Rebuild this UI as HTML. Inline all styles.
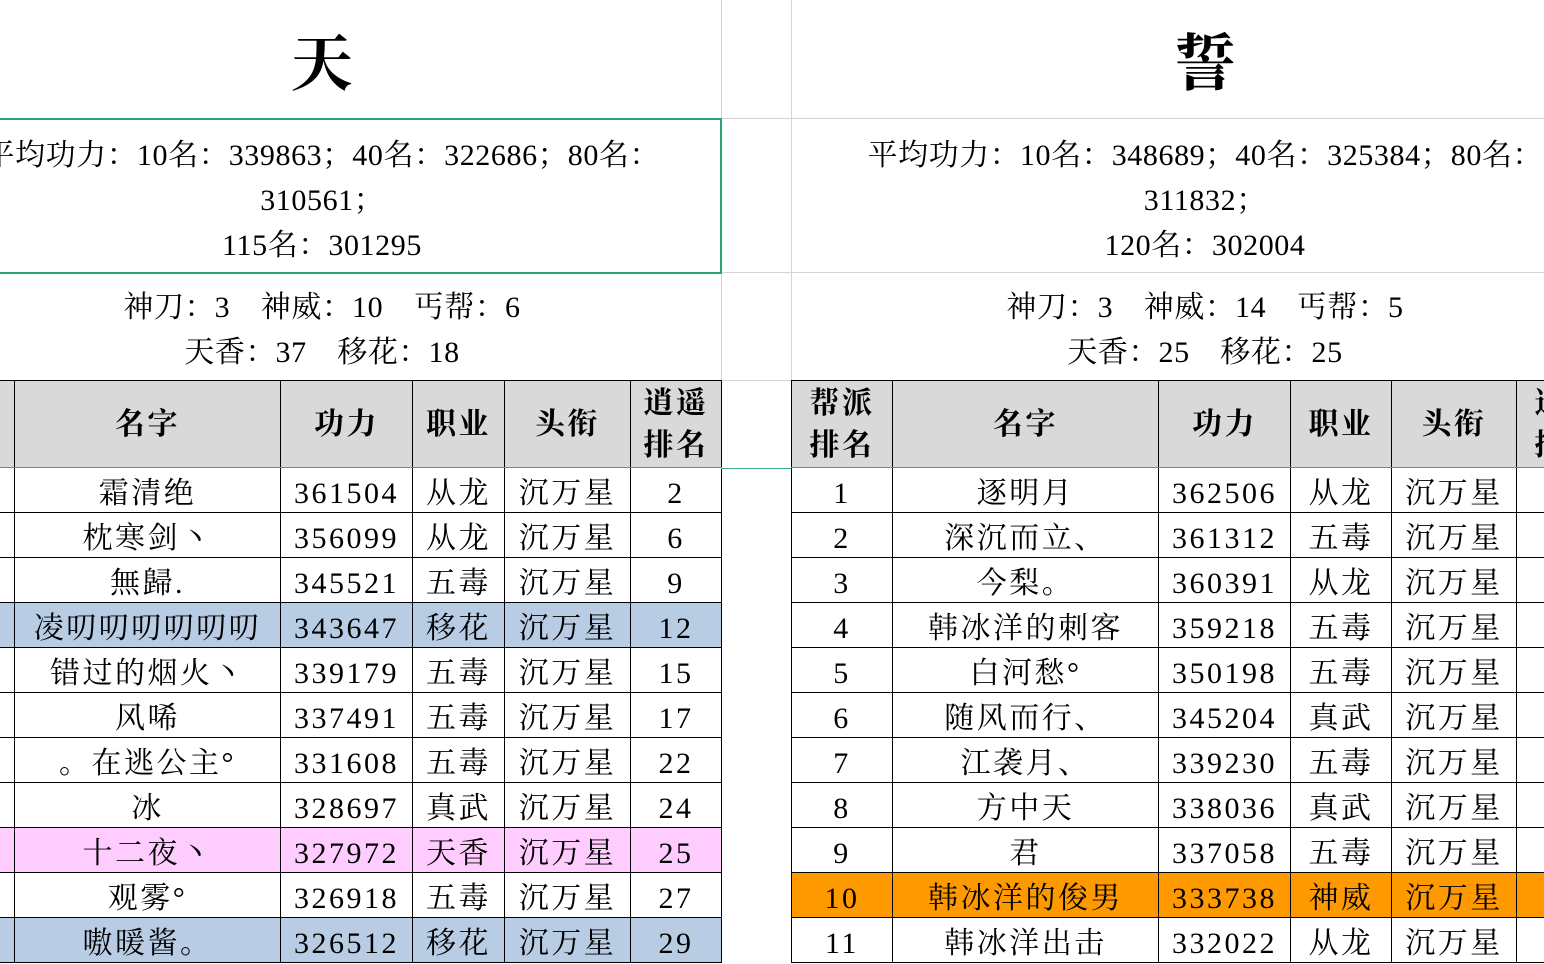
<!DOCTYPE html>
<html><head><meta charset="utf-8"><style>
body{margin:0;width:1544px;height:964px;overflow:hidden;background:#fff;position:relative;font-family:"Liberation Serif","Noto Serif CJK SC",serif;color:#000}
.v{position:absolute;top:0;height:380px;width:1px;background:#d4d4d4}
.h{position:absolute;height:1px;background:#d4d4d4}
.t{position:absolute;white-space:nowrap;text-align:center;font-size:30px;line-height:45px;letter-spacing:0.6px}
.c{display:inline-block;width:30px;text-align:left;letter-spacing:0}
table{position:absolute;top:380px;border-collapse:collapse;table-layout:fixed}
td{border:1px solid #000;height:37px;padding:7px 0 0;text-align:center;font-size:30px;line-height:37px;white-space:nowrap;overflow:hidden;letter-spacing:2.5px}
tr.hd td{background:#d9d9d9;font-weight:bold;height:84px;line-height:42px;padding:2px 0 0;border-bottom:1px solid #3aaa80}
.b td{background:#b8cce4}.p td{background:#ffccff}.o td{background:#ff9900}
</style></head><body>
<div class="v" style="left:721px"></div><div class="v" style="left:791px"></div>
<div class="h" style="left:721px;width:823px;top:118px"></div>
<div class="h" style="left:721px;width:823px;top:272px"></div>
<div class="h" style="left:721px;width:70px;top:380px"></div>
<div class="t" style="left:122px;width:400px;top:20px;font-size:62px;line-height:90px;font-weight:bold">天</div>
<div class="t" style="left:1005px;width:400px;top:20px;font-size:62px;line-height:90px;font-weight:bold">誓</div>
<div class="t" style="left:-78px;width:800px;top:133px">平均功力<span class="c">：</span>10名<span class="c">：</span>339863<span class="c">；</span>40名<span class="c">：</span>322686<span class="c">；</span>80名<span class="c">：</span><br>310561<span class="c">；</span><br>115名<span class="c">：</span>301295</div>
<div class="t" style="left:805px;width:800px;top:133px">平均功力<span class="c">：</span>10名<span class="c">：</span>348689<span class="c">；</span>40名<span class="c">：</span>325384<span class="c">；</span>80名<span class="c">：</span><br>311832<span class="c">；</span><br>120名<span class="c">：</span>302004</div>
<div class="t" style="left:-78px;width:800px;top:285px">神刀<span class="c">：</span>3　神威<span class="c">：</span>10　丐帮<span class="c">：</span>6<br>天香<span class="c">：</span>37　移花<span class="c">：</span>18</div>
<div class="t" style="left:805px;width:800px;top:285px">神刀<span class="c">：</span>3　神威<span class="c">：</span>14　丐帮<span class="c">：</span>5<br>天香<span class="c">：</span>25　移花<span class="c">：</span>25</div>
<div style="position:absolute;left:-2px;top:118px;border:2px solid #2ea66f;box-sizing:border-box;width:724px;height:156px"></div>
<table style="left:-86px;width:808px">
<colgroup><col style="width:100px"><col style="width:266px"><col style="width:132px"><col style="width:92px"><col style="width:126px"><col style="width:91px"></colgroup>
<tr class="hd"><td>帮派<br>排名</td><td>名字</td><td>功力</td><td>职业</td><td>头衔</td><td>逍遥<br>排名</td></tr>
<tr><td></td><td>霜清绝</td><td>361504</td><td>从龙</td><td>沉万星</td><td>2</td></tr>
<tr><td></td><td>枕寒剑丶</td><td>356099</td><td>从龙</td><td>沉万星</td><td>6</td></tr>
<tr><td></td><td>無歸.</td><td>345521</td><td>五毒</td><td>沉万星</td><td>9</td></tr>
<tr class="b"><td></td><td>凌叨叨叨叨叨叨</td><td>343647</td><td>移花</td><td>沉万星</td><td>12</td></tr>
<tr><td></td><td>错过的烟火丶</td><td>339179</td><td>五毒</td><td>沉万星</td><td>15</td></tr>
<tr><td></td><td>风唏</td><td>337491</td><td>五毒</td><td>沉万星</td><td>17</td></tr>
<tr><td></td><td>。在逃公主°</td><td>331608</td><td>五毒</td><td>沉万星</td><td>22</td></tr>
<tr><td></td><td>冰</td><td>328697</td><td>真武</td><td>沉万星</td><td>24</td></tr>
<tr class="p"><td></td><td>十二夜丶</td><td>327972</td><td>天香</td><td>沉万星</td><td>25</td></tr>
<tr><td></td><td>观雾°</td><td>326918</td><td>五毒</td><td>沉万星</td><td>27</td></tr>
<tr class="b"><td></td><td>嗷暖酱。</td><td>326512</td><td>移花</td><td>沉万星</td><td>29</td></tr>
</table>
<table style="left:791px;width:826px">
<colgroup><col style="width:101px"><col style="width:266px"><col style="width:132px"><col style="width:101px"><col style="width:125px"><col style="width:101px"></colgroup>
<tr class="hd"><td>帮派<br>排名</td><td>名字</td><td>功力</td><td>职业</td><td>头衔</td><td>逍遥<br>排名</td></tr>
<tr><td>1</td><td>逐明月</td><td>362506</td><td>从龙</td><td>沉万星</td><td></td></tr>
<tr><td>2</td><td>深沉而立、</td><td>361312</td><td>五毒</td><td>沉万星</td><td></td></tr>
<tr><td>3</td><td>今梨。</td><td>360391</td><td>从龙</td><td>沉万星</td><td></td></tr>
<tr><td>4</td><td>韩冰洋的刺客</td><td>359218</td><td>五毒</td><td>沉万星</td><td></td></tr>
<tr><td>5</td><td>白河愁°</td><td>350198</td><td>五毒</td><td>沉万星</td><td></td></tr>
<tr><td>6</td><td>随风而行、</td><td>345204</td><td>真武</td><td>沉万星</td><td></td></tr>
<tr><td>7</td><td>江袭月、</td><td>339230</td><td>五毒</td><td>沉万星</td><td></td></tr>
<tr><td>8</td><td>方中天</td><td>338036</td><td>真武</td><td>沉万星</td><td></td></tr>
<tr><td>9</td><td>君</td><td>337058</td><td>五毒</td><td>沉万星</td><td></td></tr>
<tr class="o"><td>10</td><td>韩冰洋的俊男</td><td>333738</td><td>神威</td><td>沉万星</td><td></td></tr>
<tr><td>11</td><td>韩冰洋出击</td><td>332022</td><td>从龙</td><td>沉万星</td><td></td></tr>
</table>
<div class="h" style="left:721px;width:70px;top:468px;background:#3aaa80"></div>
</body></html>
